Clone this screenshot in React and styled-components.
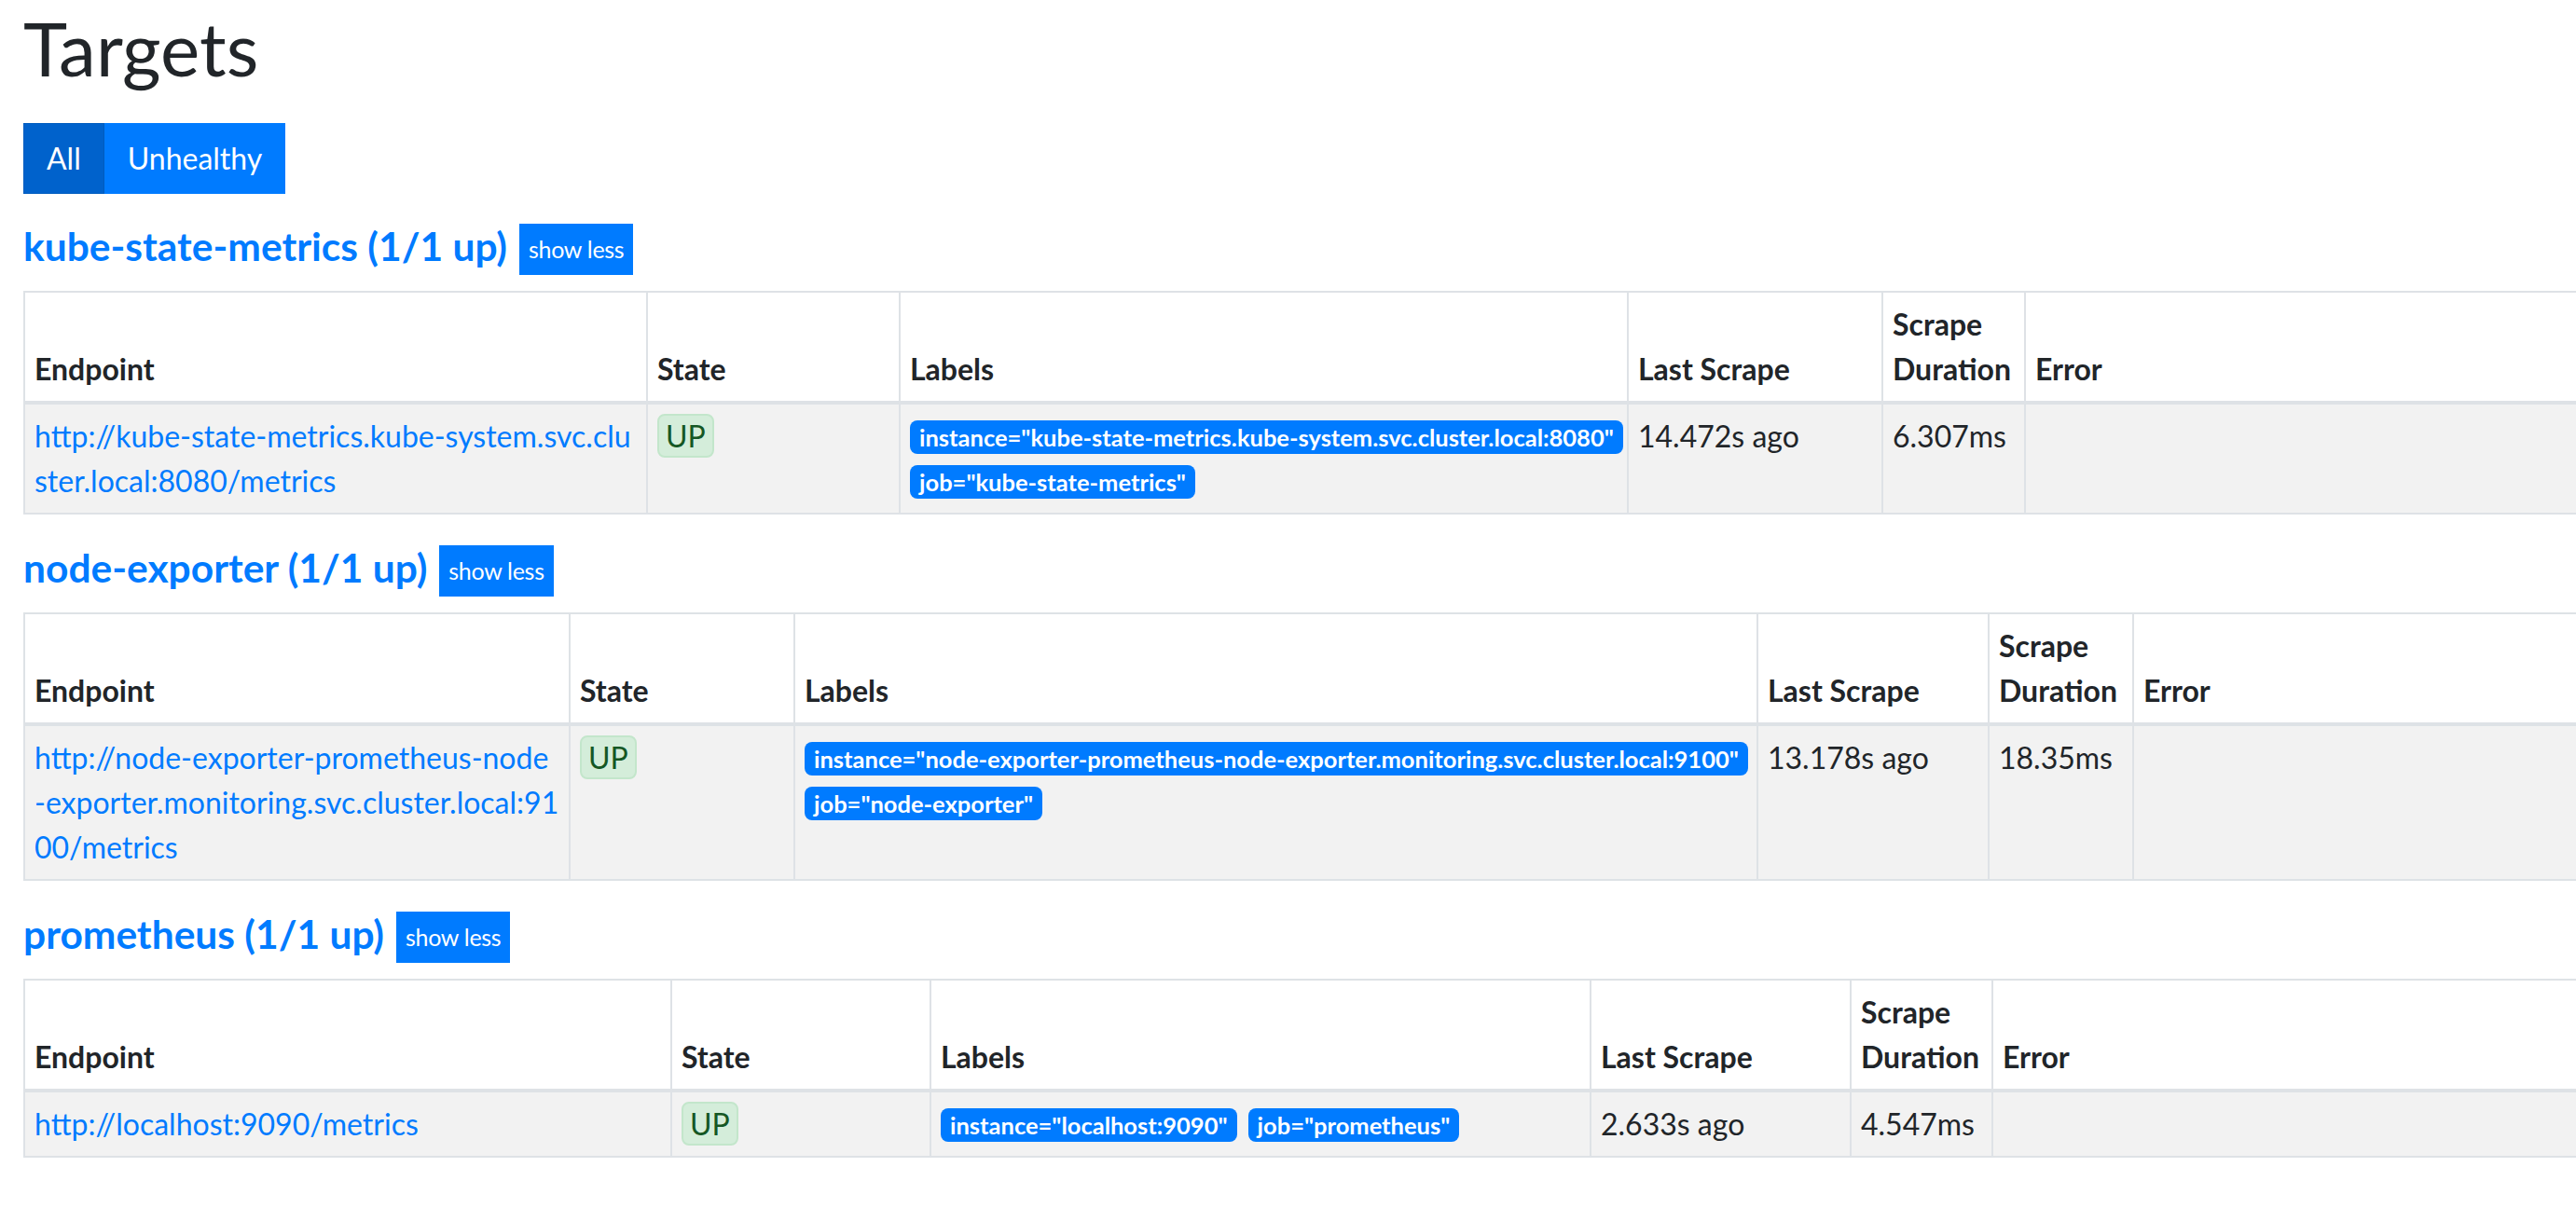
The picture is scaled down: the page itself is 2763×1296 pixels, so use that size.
import React from "react";
import styled, { createGlobalStyle } from "styled-components";

const GlobalStyle = createGlobalStyle`
  html, body {
    margin: 0;
    padding: 0;
    background: #fff;
    overflow: hidden;
  }
  body {
    font-family: "Segoe UI", Lato, "Noto Sans", sans-serif;
    font-size: 32px;
    line-height: 48px;
    color: #212529;
  }
`;

const Page = styled.div`
  padding: 3px 0 0 25px;
`;

const Title = styled.h1`
  margin: 0 0 33px;
  font-size: 80px;
  font-weight: 400;
  line-height: 96px;
`;

const FilterGroup = styled.div`
  display: flex;
  width: max-content;
  margin-bottom: 32px;
`;

const FilterButton = styled.button`
  font: inherit;
  font-size: 32px;
  line-height: 48px;
  padding: 13px 24px;
  color: #fff;
  border-radius: 0;
  cursor: pointer;
  background: ${(p) => (p.$active ? "#0062cc" : "#007bff")};
  border: 1px solid ${(p) => (p.$active ? "#005cbf" : "#007bff")};
`;

const PoolHeader = styled.div`
  display: flex;
  align-items: center;
  gap: 13px;
  height: 55px;
  margin-bottom: 17px;
`;

const PoolTitle = styled.a`
  font-size: 42.5px;
  font-weight: 700;
  line-height: 48px;
  padding-bottom: 8px;
  color: #007bff;
  text-decoration: none;
`;

const ShowLess = styled.button`
  font: inherit;
  font-size: 25px;
  line-height: 33px;
  letter-spacing: -0.3px;
  padding: 10px 9px;
  color: #fff;
  background: #007bff;
  border: 1px solid #007bff;
  border-radius: 0;
  cursor: pointer;
`;

const Table = styled.table`
  width: calc(100% + 20px);
  table-layout: fixed;
  border-collapse: collapse;
  margin-bottom: 33px;
`;

const Th = styled.th`
  border: 2px solid #dee2e6;
  border-bottom-width: 4px;
  padding: 10px;
  text-align: left;
  vertical-align: bottom;
  font-weight: 700;
`;

const Td = styled.td`
  border: 2px solid #dee2e6;
  padding: 10px;
  vertical-align: top;
  background: #f2f2f2;
`;

const EndpointLink = styled.a`
  color: #007bff;
  text-decoration: none;
  word-break: break-all;
`;

const StateBadge = styled.span`
  display: inline-block;
  padding: 0 7px;
  line-height: 43px;
  color: #155724;
  background: #d4edda;
  border: 2px solid #c3e6cb;
  border-radius: 8px;
`;

const LabelList = styled.div`
  display: flex;
  flex-wrap: wrap;
  gap: 12px;
  padding-top: 7px;
`;

const Label = styled.span`
  display: inline-block;
  padding: 6px 10px;
  font-size: 25.5px;
  font-weight: 700;
  line-height: 24px;
  white-space: nowrap;
  color: #fff;
  background: #007bff;
  border-radius: 8px;
`;

const pools = [
  {
    name: "kube-state-metrics",
    cols: [668, 271, 781, 273, 153],
    endpoint:
      "http://kube-state-metrics.kube-system.svc.cluster.local:8080/metrics",
    labels: [
      'instance="kube-state-metrics.kube-system.svc.cluster.local:8080"',
      'job="kube-state-metrics"',
    ],
    lastScrape: "14.472s ago",
    duration: "6.307ms",
  },
  {
    name: "node-exporter",
    cols: [585, 241, 1033, 248, 155],
    endpoint:
      "http://node-exporter-prometheus-node-exporter.monitoring.svc.cluster.local:9100/metrics",
    labels: [
      'instance="node-exporter-prometheus-node-exporter.monitoring.svc.cluster.local:9100"',
      'job="node-exporter"',
    ],
    lastScrape: "13.178s ago",
    duration: "18.35ms",
  },
  {
    name: "prometheus",
    cols: [694, 278, 708, 279, 152],
    endpoint: "http://localhost:9090/metrics",
    labels: ['instance="localhost:9090"', 'job="prometheus"'],
    lastScrape: "2.633s ago",
    duration: "4.547ms",
  },
];

const Pool = ({ pool }) => (
  <section>
    <PoolHeader>
      <PoolTitle href="#">{pool.name} (1/1 up)</PoolTitle>
      <ShowLess>show less</ShowLess>
    </PoolHeader>
    <Table>
      <colgroup>
        {pool.cols.map((w, i) => (
          <col key={i} style={{ width: w }} />
        ))}
        <col />
      </colgroup>
      <thead>
        <tr>
          <Th>Endpoint</Th>
          <Th>State</Th>
          <Th>Labels</Th>
          <Th>Last Scrape</Th>
          <Th>Scrape Duration</Th>
          <Th>Error</Th>
        </tr>
      </thead>
      <tbody>
        <tr>
          <Td>
            <EndpointLink href="#">{pool.endpoint}</EndpointLink>
          </Td>
          <Td>
            <StateBadge>UP</StateBadge>
          </Td>
          <Td>
            <LabelList>
              {pool.labels.map((l) => (
                <Label key={l}>{l}</Label>
              ))}
            </LabelList>
          </Td>
          <Td>{pool.lastScrape}</Td>
          <Td>{pool.duration}</Td>
          <Td />
        </tr>
      </tbody>
    </Table>
  </section>
);

export default function App() {
  return (
    <Page>
      <GlobalStyle />
      <Title>Targets</Title>
      <FilterGroup>
        <FilterButton $active>All</FilterButton>
        <FilterButton>Unhealthy</FilterButton>
      </FilterGroup>
      {pools.map((p) => (
        <Pool key={p.name} pool={p} />
      ))}
    </Page>
  );
}
